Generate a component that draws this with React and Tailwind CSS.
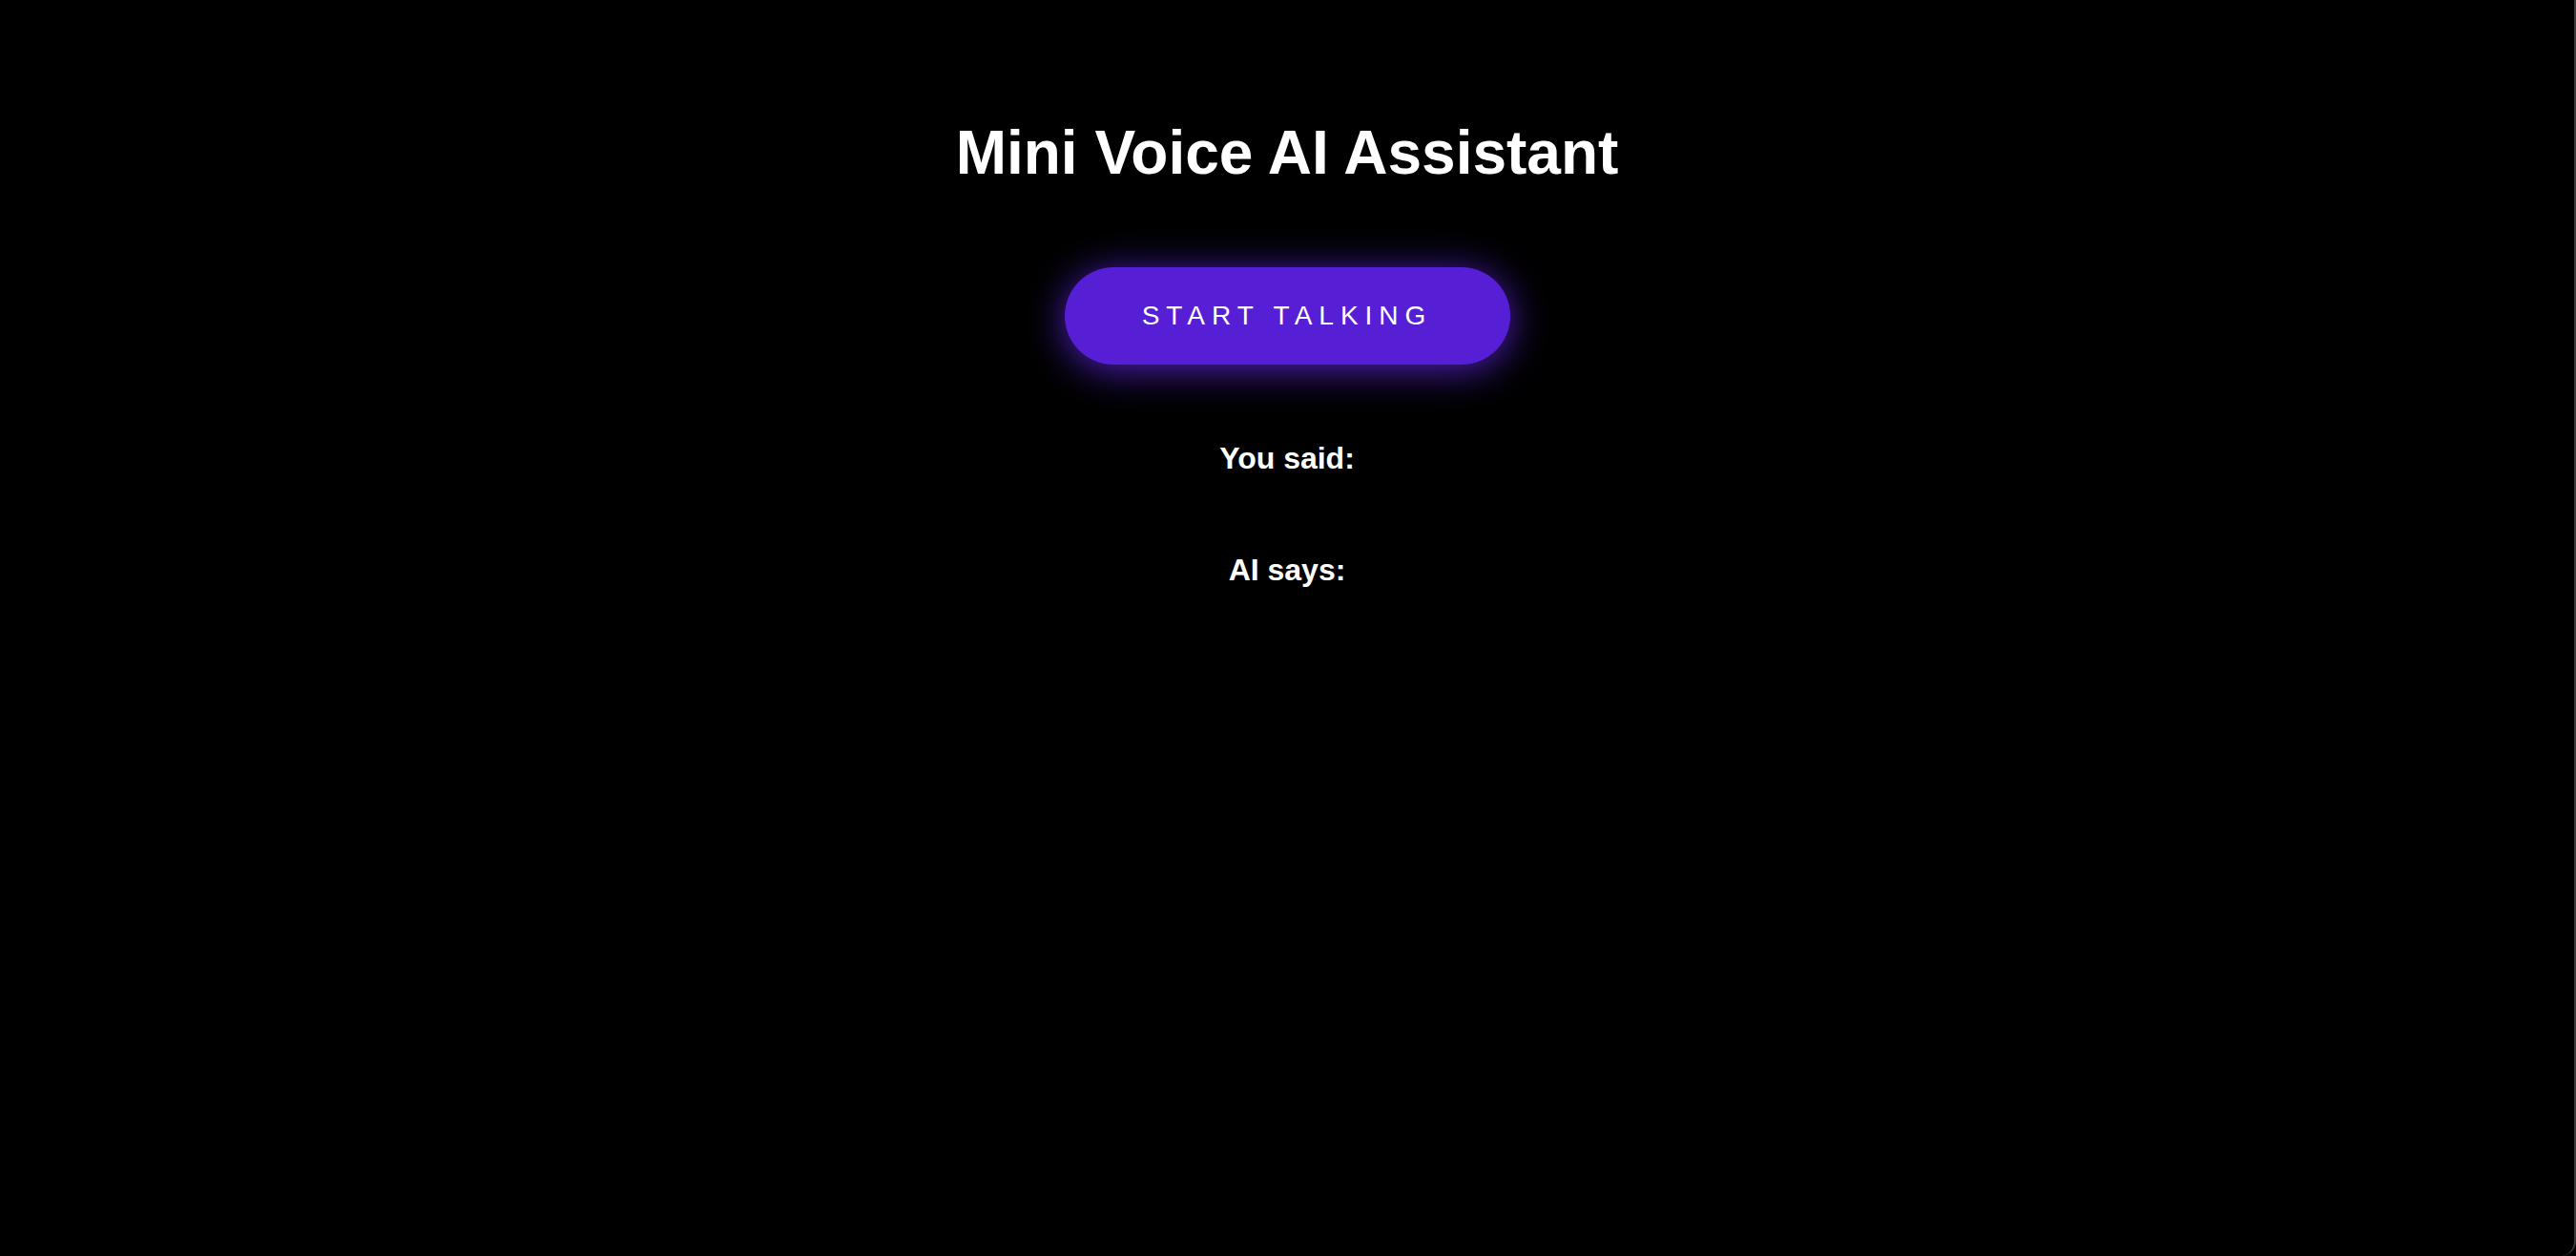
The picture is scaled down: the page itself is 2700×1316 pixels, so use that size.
export default function App() {
  return (
    <div className="h-[1316px] w-full bg-black">
      <div className="flex h-full w-full flex-col items-center rounded-br-[16px] rounded-bl-[10px] border-r-2 border-[#3c3c3c] bg-black pt-[128px] font-['Liberation_Sans',Arial,sans-serif] text-white">
        <h1 className="text-[64px] font-bold leading-none">Mini Voice AI Assistant</h1>
        <button className="mt-[88px] flex h-[102px] w-[467px] items-center justify-center rounded-full bg-[#561fd5] text-[28px] leading-none tracking-[7px] text-white shadow-[0_5px_40px_rgba(100,40,240,0.8)]">
          START TALKING
        </button>
        <p className="mt-[82px] text-[32px] font-bold leading-none">You said:</p>
        <p className="mt-[85px] text-[32px] font-bold leading-none">AI says:</p>
      </div>
    </div>
  );
}
